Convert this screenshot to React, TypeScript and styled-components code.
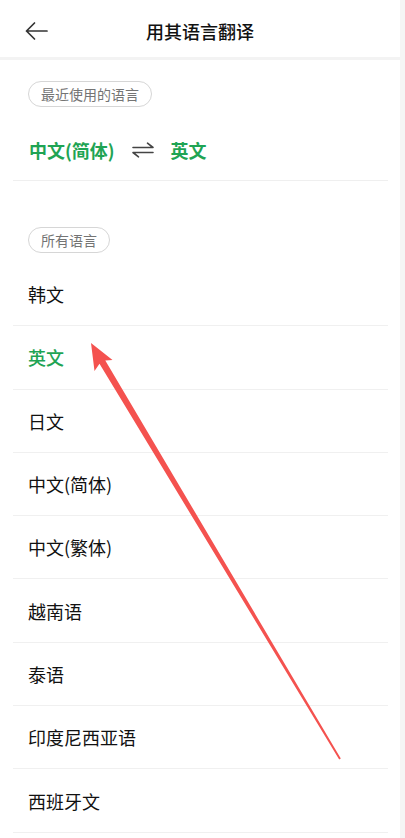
import React from "react";
import styled, { createGlobalStyle } from "styled-components";

const GREEN = "#1fa454";

const Global = createGlobalStyle`
  html, body {
    margin: 0;
    padding: 0;
    background: #f5f5f5;
  }
  body {
    font-family: "Noto Sans CJK SC", "Noto Sans", sans-serif;
    -webkit-font-smoothing: antialiased;
  }
`;

const Screen = styled.div`
  position: relative;
  width: 400px;
  height: 838px;
  overflow: hidden;
  background: #f3f3f3;
  display: flex;
  flex-direction: column;
  gap: 3px;
`;

const Header = styled.header`
  height: 57px;
  background: #fff;
  display: flex;
  align-items: center;
  justify-content: center;
  position: relative;
  flex-shrink: 0;
`;

const BackButton = styled.button`
  position: absolute;
  left: 22px;
  top: 18px;
  width: 28px;
  height: 26px;
  padding: 0;
  border: 0;
  background: none;
  display: flex;
  align-items: center;
  justify-content: center;
`;

const Title = styled.h1`
  margin: 0;
  font-size: 18px;
  font-weight: 500;
  color: #111;
  transform: translateY(2px);
`;

const Body = styled.main`
  flex: 1;
  background: #fff;
  padding-top: 21px;
`;

const Tag = styled.span<{ $top?: number }>`
  display: inline-flex;
  align-items: center;
  height: 24px;
  padding: 0 12px;
  margin-left: 28px;
  margin-top: ${(p) => p.$top ?? 0}px;
  border: 1px solid #d6d6d6;
  border-radius: 13px;
  font-size: 14px;
  color: #747474;
`;

const RecentRow = styled.div`
  margin: 13px 12px 0 13px;
  height: 60px;
  padding-left: 16px;
  display: flex;
  align-items: center;
  gap: 17px;
  border-bottom: 1px solid #efefef;
`;

const RecentLang = styled.span`
  font-size: 18px;
  font-weight: 700;
  color: ${GREEN};
`;

const List = styled.ul`
  list-style: none;
  margin: 10px 12px 0 13px;
  padding: 0;
`;

const Item = styled.li<{ $active?: boolean }>`
  height: 62.3px;
  padding-left: 15px;
  display: flex;
  align-items: center;
  border-bottom: 1px solid #f0f0f0;
  font-size: 18px;
  font-weight: ${(p) => (p.$active ? 500 : 400)};
  color: ${(p) => (p.$active ? GREEN : "#111")};
`;

const Pointer = styled.svg`
  position: absolute;
  left: 0;
  top: 0;
  pointer-events: none;
`;

const BackIcon = () => (
  <svg width="24" height="20" viewBox="0 0 24 20" fill="none">
    <path
      d="M23 10H2.5M10.5 2L2.5 10l8 8"
      stroke="#333"
      strokeWidth="1.7"
      strokeLinecap="round"
      strokeLinejoin="round"
    />
  </svg>
);

const SwapIcon = () => (
  <svg width="22" height="20" viewBox="0 0 22 20" fill="none">
    <path
      d="M1 7.5H21L15.5 3.2M21 12.5H1L6.5 16.8"
      stroke="#444"
      strokeWidth="1.6"
      strokeLinecap="round"
      strokeLinejoin="round"
    />
  </svg>
);

const languages = [
  "韩文",
  "英文",
  "日文",
  "中文(简体)",
  "中文(繁体)",
  "越南语",
  "泰语",
  "印度尼西亚语",
  "西班牙文",
];

export default function App() {
  return (
    <>
      <Global />
      <Screen>
        <Header>
          <BackButton aria-label="返回">
            <BackIcon />
          </BackButton>
          <Title>用其语言翻译</Title>
        </Header>
        <Body>
          <Tag>最近使用的语言</Tag>
          <RecentRow>
            <RecentLang>中文(简体)</RecentLang>
            <SwapIcon />
            <RecentLang>英文</RecentLang>
          </RecentRow>
          <Tag $top={46}>所有语言</Tag>
          <List>
            {languages.map((name) => (
              <Item key={name} $active={name === "英文"}>
                {name}
              </Item>
            ))}
          </List>
        </Body>
        <Pointer width="400" height="838" viewBox="0 0 400 838">
          <polygon
            points="91,343 112.5,360.1 105.3,360.6 340.8,758.6 339.2,759.4 99.5,363.8 94.5,370.9"
            fill="#f4524f"
          />
        </Pointer>
      </Screen>
    </>
  );
}
